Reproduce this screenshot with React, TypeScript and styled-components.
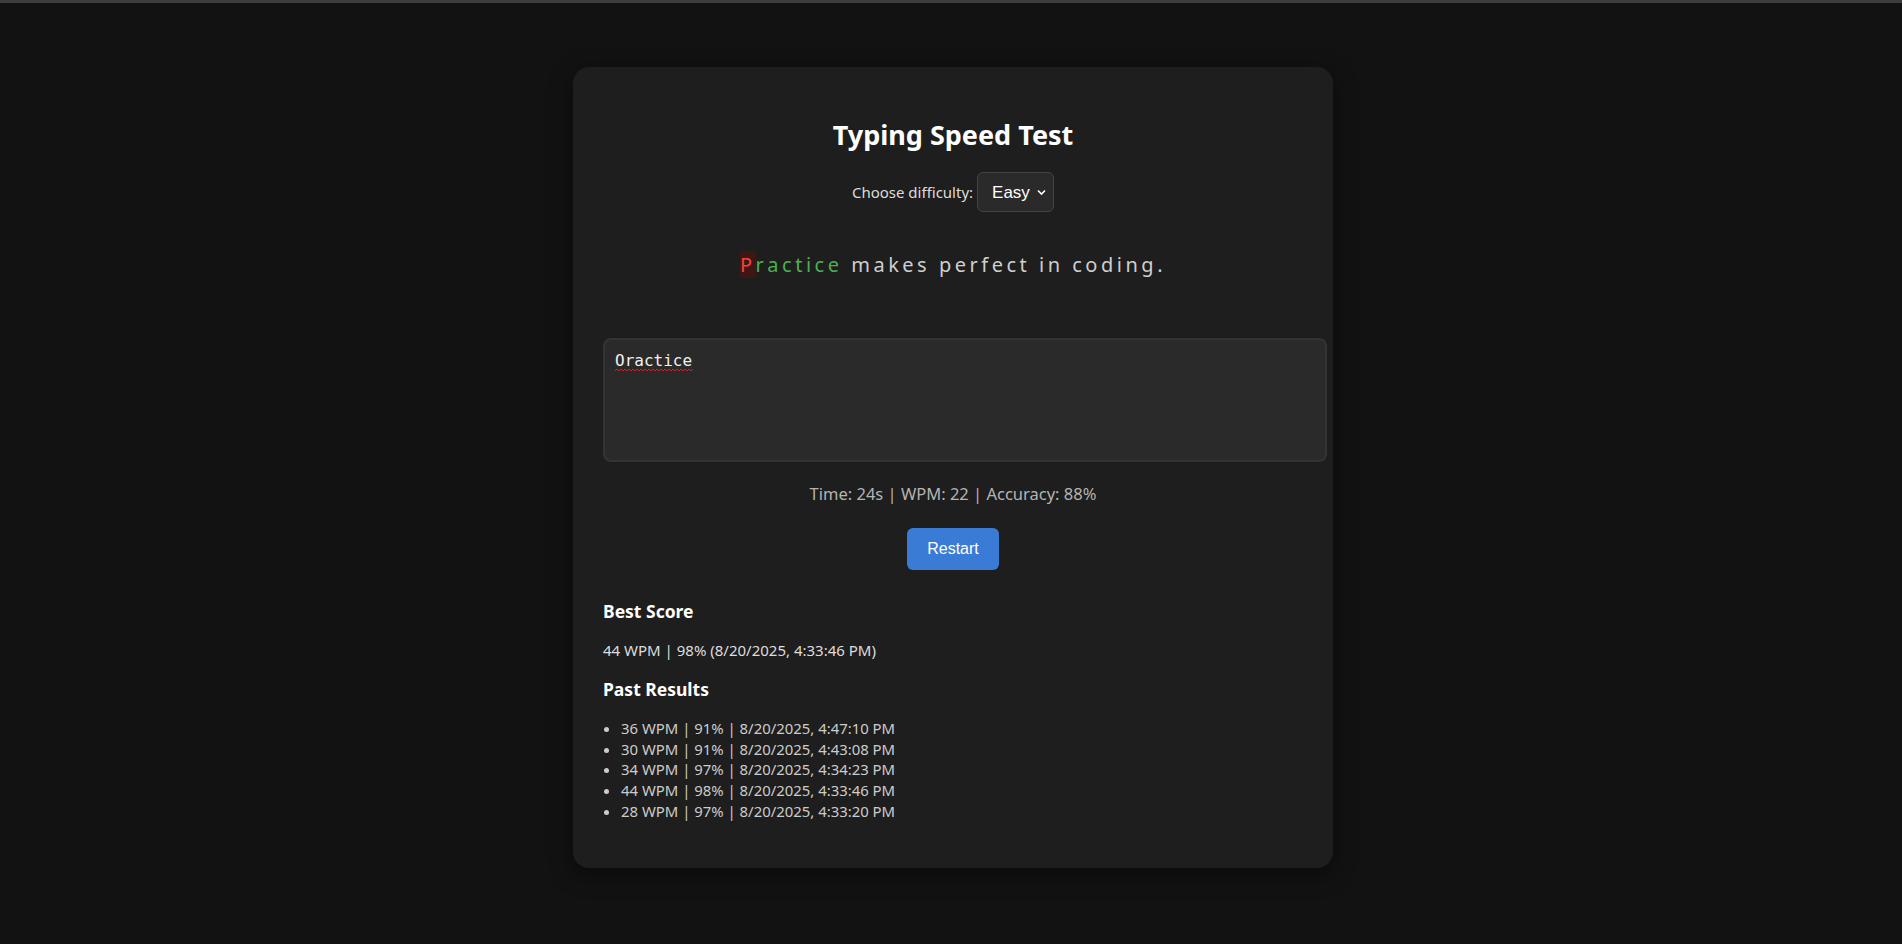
import React, { useState } from "react";
import styled, { createGlobalStyle } from "styled-components";

const Global = createGlobalStyle`
  html, body {
    margin: 0;
    padding: 0;
    background: #121212;
    color: #e0e0e0;
    font-family: "Noto Sans", "Open Sans", sans-serif;
  }
  * { box-sizing: border-box; }
`;

const TopLine = styled.div`
  height: 3px;
  background: #3d3d3d;
`;

const Page = styled.main`
  display: flex;
  justify-content: center;
  padding: 64px 0 60px 4px;
`;

const Card = styled.section`
  width: 760px;
  background: #1e1e1e;
  border-radius: 16px;
  padding: 30px 30px 46px;
  box-shadow: 0 6px 24px rgba(0, 0, 0, 0.45);
  display: flex;
  flex-direction: column;
`;

const Title = styled.h1`
  margin: 21px 0 0;
  font-size: 27px;
  line-height: 34px;
  font-weight: 700;
  color: #ffffff;
  text-align: center;
`;

const DifficultyRow = styled.div`
  margin-top: 20px;
  height: 40px;
  display: flex;
  justify-content: center;
  align-items: center;
  gap: 4px;
`;

const Label = styled.label`
  font-size: 15px;
  color: #dddddd;
`;

const SelectWrap = styled.div`
  position: relative;
  display: inline-flex;
`;

const Select = styled.select`
  appearance: none;
  -webkit-appearance: none;
  width: 77px;
  height: 40px;
  padding: 0 22px 0 14px;
  background: #2a2a2a;
  color: #ffffff;
  border: 1px solid #444444;
  border-radius: 6px;
  font-family: "Liberation Sans", Arial, sans-serif;
  font-size: 17px;
  outline: none;
`;

const Chevron = styled.svg`
  position: absolute;
  right: 8px;
  top: 16px;
  pointer-events: none;
`;

const Sentence = styled.p`
  margin: 39px 0 0;
  text-align: center;
  font-size: 20px;
  line-height: 27px;
  white-space: pre-wrap;
`;

const Char = styled.span<{ $state: "correct" | "incorrect" | "pending" }>`
  display: inline-block;
  white-space: pre;
  letter-spacing: 3.5px;
  color: ${(p) =>
    p.$state === "correct" ? "#4caf50" : p.$state === "incorrect" ? "#f44336" : "#cfcfcf"};
  background: ${(p) => (p.$state === "incorrect" ? "#3e1616" : "transparent")};
`;

const InputWrap = styled.div`
  position: relative;
  margin-top: 60px;
`;

const TextArea = styled.textarea`
  display: block;
  box-sizing: content-box;
  width: 100%;
  height: 100px;
  padding: 10px;
  background: #2a2a2a;
  color: #f0f0f0;
  border: 2px solid #333333;
  border-radius: 8px;
  font-family: "DejaVu Sans Mono", "Liberation Mono", monospace;
  font-size: 16px;
  line-height: 22px;
  resize: none;
  outline: none;
  caret-color: #ffffff;
`;

const Squiggle = styled.svg`
  position: absolute;
  left: 12px;
  top: 30px;
  pointer-events: none;
`;

const Stats = styled.div`
  margin-top: 20px;
  text-align: center;
  font-size: 16.5px;
  line-height: 24px;
  color: #b4b4b4;
`;

const RestartButton = styled.button`
  align-self: center;
  margin-top: 22px;
  height: 42px;
  padding: 0 20px;
  background: #3a7bd5;
  color: #ffffff;
  border: none;
  border-radius: 6px;
  font-family: "Liberation Sans", Arial, sans-serif;
  font-size: 16px;
  cursor: pointer;
`;

const SectionTitle = styled.h3<{ $top: number }>`
  margin: ${(p) => p.$top}px 0 0;
  font-size: 17.5px;
  line-height: 24px;
  font-weight: 700;
  color: #ffffff;
`;

const BestText = styled.p`
  margin: 17px 0 0;
  font-size: 15px;
  line-height: 20.8px;
  color: #dddddd;
`;

const ResultList = styled.ul`
  margin: 17px 0 0;
  padding-left: 18px;
  list-style: disc;
`;

const ResultItem = styled.li`
  font-size: 14.9px;
  line-height: 20.8px;
  color: #cccccc;
  &::marker {
    color: #cccccc;
  }
`;

const SENTENCE = "Practice makes perfect in coding.";
const TYPED = "Oractice";

const results = [
  "36 WPM | 91% | 8/20/2025, 4:47:10 PM",
  "30 WPM | 91% | 8/20/2025, 4:43:08 PM",
  "34 WPM | 97% | 8/20/2025, 4:34:23 PM",
  "44 WPM | 98% | 8/20/2025, 4:33:46 PM",
  "28 WPM | 97% | 8/20/2025, 4:33:20 PM",
];

export default function App() {
  const [typed, setTyped] = useState(TYPED);
  const [level, setLevel] = useState("easy");

  return (
    <>
      <Global />
      <TopLine />
      <Page>
        <Card>
          <Title>Typing Speed Test</Title>
          <DifficultyRow>
            <Label htmlFor="difficulty">Choose difficulty:</Label>
            <SelectWrap>
              <Select id="difficulty" value={level} onChange={(e) => setLevel(e.target.value)}>
                <option value="easy">Easy</option>
                <option value="medium">Medium</option>
                <option value="hard">Hard</option>
              </Select>
              <Chevron width="9" height="8" viewBox="0 0 9 8">
                <path d="M1 2.5 L4.5 6 L8 2.5" fill="none" stroke="#ffffff" strokeWidth="1.6" />
              </Chevron>
            </SelectWrap>
          </DifficultyRow>
          <Sentence>
            {SENTENCE.split("").map((ch, i) => {
              const state =
                i < typed.length ? (typed[i] === ch ? "correct" : "incorrect") : "pending";
              return (
                <Char key={i} $state={state}>
                  {ch}
                </Char>
              );
            })}
          </Sentence>
          <InputWrap>
            <TextArea
              autoFocus
              value={typed}
              spellCheck={false}
              onChange={(e) => setTyped(e.target.value)}
              onFocus={(e) => {
                const el = e.currentTarget;
                el.setSelectionRange(el.value.length, el.value.length);
              }}
            />
            <Squiggle width="78" height="4" viewBox="0 0 78 4">
              <path
                d="M0 3 L2 1 L4 3 L6 1 L8 3 L10 1 L12 3 L14 1 L16 3 L18 1 L20 3 L22 1 L24 3 L26 1 L28 3 L30 1 L32 3 L34 1 L36 3 L38 1 L40 3 L42 1 L44 3 L46 1 L48 3 L50 1 L52 3 L54 1 L56 3 L58 1 L60 3 L62 1 L64 3 L66 1 L68 3 L70 1 L72 3 L74 1 L76 3 L78 1"
                fill="none"
                stroke="#d42020"
                strokeWidth="1"
              />
            </Squiggle>
          </InputWrap>
          <Stats>Time: 24s | WPM: 22 | Accuracy: 88%</Stats>
          <RestartButton type="button" onClick={() => setTyped("")}>
            Restart
          </RestartButton>
          <SectionTitle $top={29}>Best Score</SectionTitle>
          <BestText>44 WPM | 98% (8/20/2025, 4:33:46 PM)</BestText>
          <SectionTitle $top={16}>Past Results</SectionTitle>
          <ResultList>
            {results.map((r) => (
              <ResultItem key={r}>{r}</ResultItem>
            ))}
          </ResultList>
        </Card>
      </Page>
    </>
  );
}
